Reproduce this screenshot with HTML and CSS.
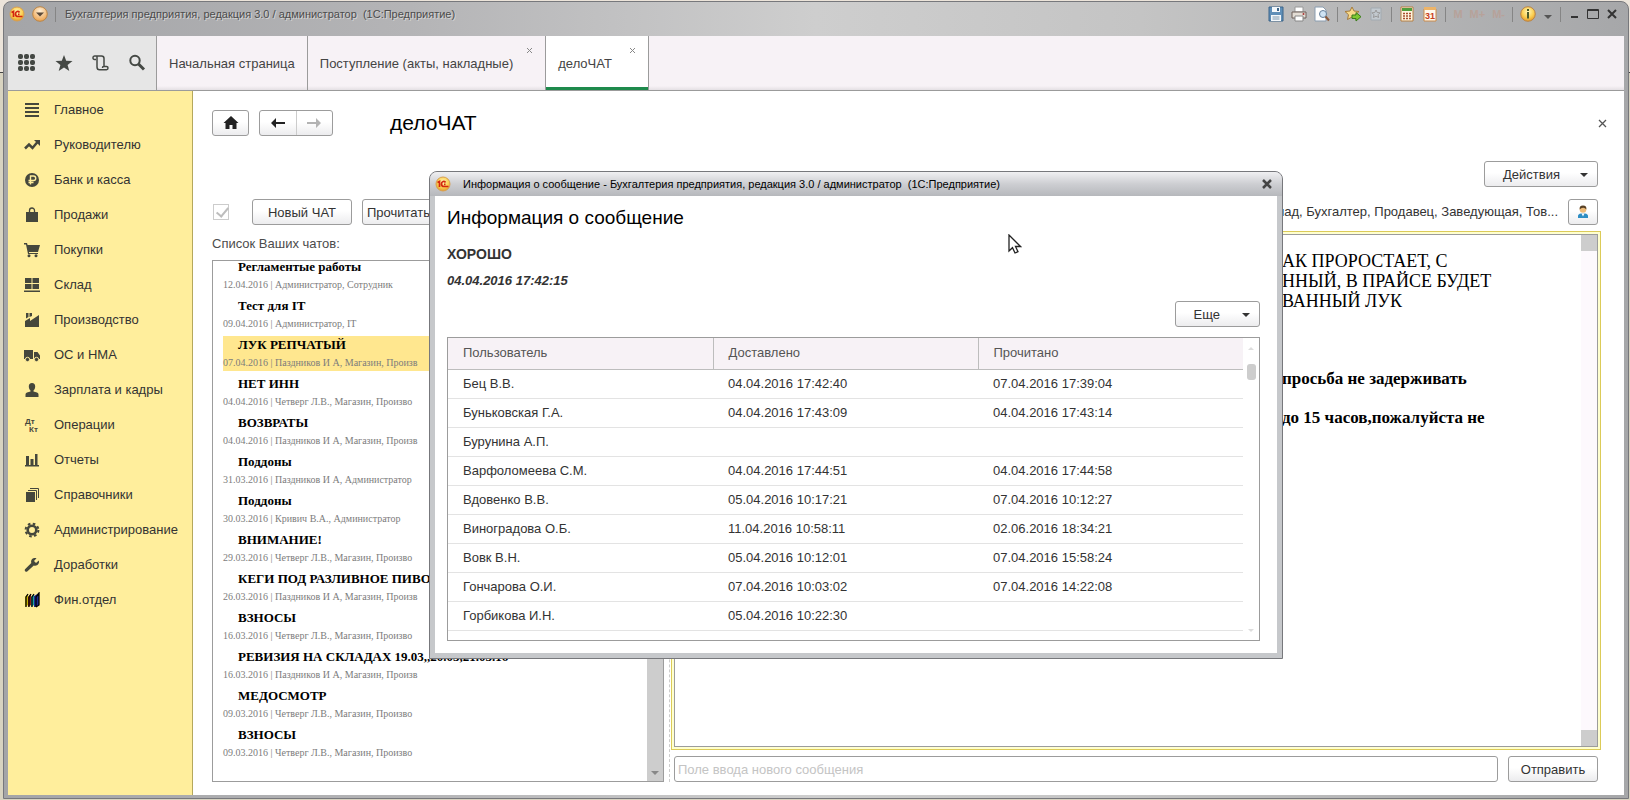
FILE: index.html
```html
<!DOCTYPE html>
<html lang="ru">
<head>
<meta charset="utf-8">
<title>Бухгалтерия предприятия, редакция 3.0</title>
<link rel="stylesheet" href="styles.css">
</head>
<body>
<svg class="defs" aria-hidden="true">
  <defs>
    <radialGradient id="gold" cx="50%" cy="35%" r="65%"><stop offset="0" stop-color="#fff6b8"/><stop offset="0.6" stop-color="#fbcf52"/><stop offset="1" stop-color="#e39a2c"/></radialGradient>
    <radialGradient id="orange" cx="50%" cy="30%" r="70%"><stop offset="0" stop-color="#fff0d8"/><stop offset="1" stop-color="#eda24c"/></radialGradient>
    <symbol id="logo" viewBox="0 0 16 16"><circle cx="8" cy="8" r="7" fill="url(#gold)" stroke="#d9a050"/><path d="M2.500 6.500 4.500 5.500V11M10.500 6.500C9.500 4.500 6.500 5.500 6.500 8S8 10.500 9 10.500H13.500M10.500 8.300H9" fill="none" stroke="#d3260f" stroke-width="1.700"/></symbol>
  </defs>
</svg>
<div class="window">
  <header class="titlebar">
    <svg class="logo" viewBox="0 0 16 16"><use href="#logo"/></svg>
    <button class="plain" aria-label="Меню"><svg width="16" height="16" viewBox="0 0 16 16"><circle cx="8" cy="8" r="7.300" fill="url(#orange)" stroke="#b98548"/><path d="M4 6.500h8L8 10.500z" fill="#5c4a38"/></svg></button>
    <span class="sep"></span>
    <span class="title">Бухгалтерия предприятия, редакция 3.0 / администратор&nbsp; (1С:Предприятие)</span>
    <div class="systools">
      <button class="plain" aria-label="Сохранить"><svg width="16" height="16" viewBox="0 0 16 16"><path d="M1 1h14v14H1z" fill="#5f8fb8" stroke="#3d6589"/><path d="M4 1h8v5H4zM3 9h10v6H3z" fill="#f3f7fa"/><path d="M4.500 11h7M4.500 13h7" stroke="#7c98ae"/><path d="M9 2h2v3H9z" fill="#3d6589"/></svg></button>
      <button class="plain" aria-label="Печать"><svg width="16" height="16" viewBox="0 0 16 16"><path d="M4 1h8v5H4z" fill="#fff" stroke="#999"/><path d="M1 6h14v6H1z" fill="#e3ddd5" stroke="#6d5f58"/><path d="M4 10h8v5H4z" fill="#fff" stroke="#888"/><circle cx="12.500" cy="8" r="1" fill="#a33"/></svg></button>
      <button class="plain" aria-label="Предварительный просмотр"><svg width="16" height="16" viewBox="0 0 16 16"><path d="M1 1h8l3 3v11H1z" fill="#fff" stroke="#8a9db0"/><circle cx="9" cy="8" r="3.500" fill="#cfe3f3" stroke="#66809a"/><path d="m11.500 10.500 3.500 4" stroke="#8b5a3c" stroke-width="2"/></svg></button>
      <span class="sep"></span>
      <button class="plain" aria-label="В избранное"><svg width="16" height="16" viewBox="0 0 16 16"><path d="m7 1 2 4 5 .5-3.500 3.200 1 4.800L7 11l-4.500 2.500 1-4.800L0 5.500 5 5z" fill="#f7d98a" stroke="#a67b3a"/><path d="M7 9h4V6.500l5 4.200-5 4.300v-2.500H7z" fill="#7fc832" stroke="#3b7d1c"/></svg></button>
      <button class="plain dim" aria-label="Избранное"><svg width="16" height="16" viewBox="0 0 16 16"><path d="M3 2h10v12H3z" fill="#c8d2da" stroke="#9aa6b0"/><path d="m8 4 1.200 2.500 2.800.3-2 2 .6 2.700L8 10.200 5.400 11.500 6 8.800l-2-2 2.800-.3z" fill="none" stroke="#8c8c8c"/></svg></button>
      <span class="sep"></span>
      <button class="plain" aria-label="Калькулятор"><svg width="16" height="16" viewBox="0 0 16 16"><path d="M2 1h12v14H2z" fill="#fff5e0" stroke="#b57e42"/><path d="M3 2h10v3H3z" fill="#4f9d3c"/><path d="M4 7.500h8M4 10h8M4 12.500h8" stroke="#a9502e" stroke-width="1.500" stroke-dasharray="2 1"/></svg></button>
      <button class="plain" aria-label="Календарь"><svg width="16" height="16" viewBox="0 0 16 16"><path d="M2 3h12v12H2z" fill="#fff9ee" stroke="#c98a4a"/><path d="M2 1h12v3H2z" fill="#edb468"/><text class="cal" x="8" y="13" text-anchor="middle">31</text></svg></button>
      <span class="sep"></span>
      <span class="mem">M</span><span class="mem">M+</span><span class="mem">M-</span>
      <span class="sep"></span>
      <button class="plain" aria-label="Справка"><svg width="16" height="16" viewBox="0 0 16 16"><circle cx="8" cy="8" r="7.300" fill="url(#gold)" stroke="#b98548"/><path d="M7 3h2v2H7zM7 6h2v6.500H7z" fill="#4b5a2a"/></svg></button>
      <svg width="10" height="16" viewBox="0 0 10 16"><path d="M1 9h8l-4 4z" fill="#555"/></svg>
      <span class="sep"></span>
      <button class="plain" aria-label="Свернуть"><svg width="12" height="16" viewBox="0 0 12 16"><path d="M3 11h7" stroke="#333" stroke-width="2"/></svg></button>
      <button class="plain" aria-label="Развернуть"><svg width="12" height="16" viewBox="0 0 12 16"><path d="M.5 3.500h11v9H.500z M0 4.500h12" fill="none" stroke="#333"/></svg></button>
      <button class="plain" aria-label="Закрыть"><svg width="12" height="16" viewBox="0 0 12 16"><path d="m2 4 8 8M10 4l-8 8" stroke="#333" stroke-width="2"/></svg></button>
    </div>
  </header>

  <div class="tabbar">
    <div class="quick">
      <button class="plain" aria-label="Разделы"><svg width="18" height="18" viewBox="0 0 18 18" fill="#444844"><rect x="0" y="0" width="5" height="5" rx="2"/><rect x="6" y="0" width="5" height="5" rx="2"/><rect x="12" y="0" width="5" height="5" rx="2"/><rect x="0" y="6" width="5" height="5" rx="2"/><rect x="6" y="6" width="5" height="5" rx="2"/><rect x="12" y="6" width="5" height="5" rx="2"/><rect x="0" y="12" width="5" height="5" rx="2"/><rect x="6" y="12" width="5" height="5" rx="2"/><rect x="12" y="12" width="5" height="5" rx="2"/></svg></button>
      <button class="plain" aria-label="Избранное"><svg width="18" height="18" viewBox="0 0 18 18"><path d="m9 1 2.200 5.700 6.300.3-4.900 3.900 1.700 6.100L9 13.500 3.700 17l1.700-6.100L.5 7l6.300-.3z" fill="#444844"/></svg></button>
      <button class="plain" aria-label="История"><svg width="18" height="18" viewBox="0 0 18 18"><path d="M5 5.500H3.500A1.500 1.700 0 0 1 3.500 2H10.500Q13 2 13 4.500V12.500M6 2.500V13Q6 15.800 8.500 15.800H15.500A1.500 1.700 0 0 0 15.500 12.400H12.500Q11.500 12.400 11.500 14" fill="none" stroke="#444844" stroke-width="1.500" stroke-linejoin="round"/></svg></button>
      <button class="plain" aria-label="Поиск"><svg width="18" height="18" viewBox="0 0 18 18"><circle cx="7" cy="6.500" r="4.700" fill="none" stroke="#444844" stroke-width="2"/><path d="m10.500 10 5.500 5.500" stroke="#444844" stroke-width="3"/></svg></button>
    </div>
    <nav class="tabs">
      <a class="tab" href="#">Начальная страница</a>
      <div class="tab tab-wide"><a href="#">Поступление (акты, накладные)</a><button class="tab-x" aria-label="Закрыть вкладку"><svg width="7" height="7" viewBox="0 0 7 7"><path d="m1 1 5 5M6 1 1 6" stroke="#888"/></svg></button></div>
      <div class="tab tab-active"><a href="#">делоЧАТ</a><button class="tab-x" aria-label="Закрыть вкладку"><svg width="7" height="7" viewBox="0 0 7 7"><path d="m1 1 5 5M6 1 1 6" stroke="#888"/></svg></button></div>
    </nav>
  </div>

  <div class="body">
    <nav class="sidebar">
      <a href="#"><svg viewBox="0 0 16 16"><path d="M1 1h14v2H1zM1 5h14v2H1zM1 9h14v2H1zM1 13h14v2H1z"/></svg>Главное</a>
      <a href="#"><svg viewBox="0 0 16 16"><path d="m1 11.500 4-4 3.500 3.500 5-6" fill="none" stroke="#45473c" stroke-width="2.500"/><path d="M10 3h6v6z"/></svg>Руководителю</a>
      <a href="#"><svg viewBox="0 0 16 16"><circle cx="8" cy="8" r="7"/><path d="M6.500 12.500V4H9.500a2.200 2.200 0 0 1 0 4.500H4.500M4.500 10.500H9.500" fill="none" stroke="#ffee9c" stroke-width="1.400"/></svg>Банк и касса</a>
      <a href="#"><svg viewBox="0 0 16 16"><path d="M2 5h12v10H2z"/><path d="M5.500 7V3.500a2.500 2.500 0 0 1 5 0V7" fill="none" stroke="#45473c" stroke-width="1.300"/></svg>Продажи</a>
      <a href="#"><svg viewBox="0 0 16 16"><path d="M0 1h3l.6 2H16l-2 7H5v1h9v1H4L2 2.500H0z"/><circle cx="5" cy="13.800" r="1.500"/><circle cx="12" cy="13.800" r="1.500"/></svg>Покупки</a>
      <a href="#"><svg viewBox="0 0 16 16"><path d="M1 1h6.500v5H1zM8.500 1H15v5H8.500zM1 7h6.500v5H1zM8.500 7H15v5H8.500zM0 13.500h16v1.500H0z"/></svg>Склад</a>
      <a href="#"><svg viewBox="0 0 16 16"><path d="M1 15V9l5-3v3l9-6v12zM2 1h2.500v4L2 6.500zM5.500 1H8v3l-2.500 1z"/></svg>Производство</a>
      <a href="#"><svg viewBox="0 0 16 16"><path d="M0 3h9v9H0zM10 5h3.500L16 8.500V12h-6z"/><circle cx="3.500" cy="12.500" r="2.200" stroke="#ffee9c"/><circle cx="12.500" cy="12.500" r="2.200" stroke="#ffee9c"/></svg>ОС и НМА</a>
      <a href="#"><svg viewBox="0 0 16 16"><path d="M8 1a3.300 3.500 0 0 1 3.200 3.500C11.200 7 10 8 9.500 8.500V9.500L13 10.500q1.500.5 1.500 2V15H1.500V12.500q0-1.500 1.500-2L6.500 9.500V8.500C6 8 4.800 7 4.800 4.500A3.300 3.500 0 0 1 8 1"/></svg>Зарплата и кадры</a>
      <a href="#"><svg viewBox="0 0 16 16"><text class="dk" x="1" y="7">Дт</text><text class="dk" x="5" y="15">Кт</text></svg>Операции</a>
      <a href="#"><svg viewBox="0 0 16 16"><path d="M2 4h3v9H2zM6.500 7h3v6h-3zM11 2h2.500v11H11zM1 13h14v1.500H1z"/></svg>Отчеты</a>
      <a href="#"><svg viewBox="0 0 16 16"><path d="M2 5h9v10H2z"/><path d="M4 3.500h8.500V13M6 1.500h8.500V11" fill="none" stroke="#45473c"/></svg>Справочники</a>
      <a href="#"><svg viewBox="0 0 16 16"><circle cx="8" cy="8" r="4.300" fill="none" stroke="#45473c" stroke-width="2.600"/><circle cx="8" cy="8" r="6.400" fill="none" stroke="#45473c" stroke-width="2" stroke-dasharray="2.600 2.430"/></svg>Администрирование</a>
      <a href="#"><svg viewBox="0 0 16 16"><path d="M14.800 3.500 12 6 10 4l2.500-2.800C9 0 6.300 2.500 7.300 6L1 12.200q-.8 1 .2 2t2 .2L9.800 8.500c3.500 1 6-2 5-5z"/></svg>Доработки</a>
      <a href="#"><svg viewBox="0 0 16 16"><path d="M1 5 4 2v11l-3 2z" fill="#c8b400"/><path d="M4 5 7 2v11l-3 2z" fill="#8e2018"/><path d="M7 5l3-3v11l-3 2z" fill="#18a0a0"/><path d="m10 4 5-3v12l-4 2H10z" fill="#1c2a90"/><path d="M2 15V5l2-3M5 15V5l2-3M8 15V5l2-3M12 15V5l3-4v12l-3 2" fill="none" stroke="#000" stroke-width="1.300"/></svg>Фин.отдел</a>
    </nav>

    <main class="content">
      <div class="navrow">
        <button class="btn home" aria-label="Домой"><svg width="16" height="14" viewBox="0 0 16 14"><path d="m8 0 7.500 7H13.500v6H9.500V9h-3v4h-4V7H.5z" fill="#222"/></svg></button>
        <div class="pair">
          <button aria-label="Назад"><svg width="14" height="12" viewBox="0 0 14 12"><path d="M14 5H5V1L0 6l5 5V7h9z" fill="#222"/></svg></button>
          <button aria-label="Вперед"><svg width="14" height="12" viewBox="0 0 14 12"><path d="M0 5h9V1l5 5-5 5V7H0z" fill="#b3b3b3"/></svg></button>
        </div>
        <h1>делоЧАТ</h1>
        <button class="plain form-x" aria-label="Закрыть"><svg width="9" height="9" viewBox="0 0 9 9"><path d="m1 1 7 7M8 1 1 8" stroke="#555" stroke-width="1.300"/></svg></button>
      </div>
      <div class="actions"><button class="btn drop">Действия<span class="caret"></span></button></div>

      <div class="split">
        <section class="left">
          <div class="tools">
            <input class="check" type="checkbox" checked disabled aria-label="Отметка">
            <button class="btn newchat">Новый ЧАТ</button>
            <button class="btn readall">Прочитать все</button>
          </div>
          <p class="label">Список Ваших чатов:</p>
          <div class="chatbox">
            <ul class="chats">
              <li><b>Регламентые работы</b><span>12.04.2016 | Администратор, Сотрудник</span></li>
              <li><b>Тест для IT</b><span>09.04.2016 | Администратор, IT</span></li>
              <li class="sel"><b>ЛУК РЕПЧАТЫЙ</b><span>07.04.2016 | Паздников И А, Магазин, Произв</span></li>
              <li><b>НЕТ ИНН</b><span>04.04.2016 | Четверг Л.В., Магазин, Произво</span></li>
              <li><b>ВОЗВРАТЫ</b><span>04.04.2016 | Паздников И А, Магазин, Произв</span></li>
              <li><b>Поддоны</b><span>31.03.2016 | Паздников И А, Администратор</span></li>
              <li><b>Поддоны</b><span>30.03.2016 | Кривич В.А., Администратор</span></li>
              <li><b>ВНИМАНИЕ!</b><span>29.03.2016 | Четверг Л.В., Магазин, Произво</span></li>
              <li><b>КЕГИ ПОД РАЗЛИВНОЕ ПИВО</b><span>26.03.2016 | Паздников И А, Магазин, Произв</span></li>
              <li><b>ВЗНОСЫ</b><span>16.03.2016 | Четверг Л.В., Магазин, Произво</span></li>
              <li><b>РЕВИЗИЯ НА СКЛАДАХ 19.03,,20.03,21.03.16</b><span>16.03.2016 | Паздников И А, Магазин, Произв</span></li>
              <li><b>МЕДОСМОТР</b><span>09.03.2016 | Четверг Л.В., Магазин, Произво</span></li>
              <li><b>ВЗНОСЫ</b><span>09.03.2016 | Четверг Л.В., Магазин, Произво</span></li>
            </ul>
            <div class="track"><span class="caret"></span></div>
          </div>
        </section>
        <div class="splitter"></div>
        <section class="right">
          <div class="tools people">
            <span>Склад, Бухгалтер, Продавец, Заведующая, Тов...</span>
            <button class="btn person" aria-label="Участники"><svg width="14" height="14" viewBox="0 0 14 14"><path d="M2 13V11q0-2 3-2.500h4q3 .5 3 2.500v2z" fill="#2e8ec4"/><path d="m5.500 8.500 1.500 3 1.500-3z" fill="#fff"/><circle cx="7" cy="4.500" r="3.300" fill="#eebc7a"/><path d="M3.700 4.500Q3 .5 7 .5t3.300 4Q9 2.500 7 2.700T3.700 4.500" fill="#594126"/></svg></button>
          </div>
          <div class="frame">
            <div class="messages">
              <div class="text">
                <p>АК ПРОРОСТАЕТ, С<br>ННЫЙ, В ПРАЙСЕ БУДЕТ<br>ВАННЫЙ ЛУК</p>
                <p class="strong">просьба не задерживать</p>
                <p class="strong">до 15 часов,пожалуйста не</p>
              </div>
              <div class="strip"></div>
            </div>
          </div>
          <div class="send">
            <input type="text" placeholder="Поле ввода нового сообщения" aria-label="Поле ввода нового сообщения">
            <button class="btn">Отправить</button>
          </div>
        </section>
      </div>
    </main>
  </div>
</div>

<div class="modal" role="dialog" aria-labelledby="info-title">
  <header class="modal-bar">
    <svg class="logo" viewBox="0 0 16 16"><use href="#logo"/></svg>
    <span>Информация о сообщение - Бухгалтерия предприятия, редакция 3.0 / администратор&nbsp; (1С:Предприятие)</span>
    <button class="plain" aria-label="Закрыть"><svg width="12" height="12" viewBox="0 0 12 12"><path d="m2 2 8 8M10 2l-8 8" stroke="#444" stroke-width="2.500"/></svg></button>
  </header>
  <div class="modal-body">
    <h2 id="info-title">Информация о сообщение</h2>
    <p class="msg">ХОРОШО</p>
    <p class="date">04.04.2016 17:42:15</p>
    <div class="more"><button class="btn drop">Еще<span class="caret"></span></button></div>
    <div class="grid">
      <table>
        <thead><tr><th>Пользователь</th><th>Доставлено</th><th>Прочитано</th></tr></thead>
        <tbody>
          <tr><td>Бец В.В.</td><td>04.04.2016 17:42:40</td><td>07.04.2016 17:39:04</td></tr>
          <tr><td>Буньковская Г.А.</td><td>04.04.2016 17:43:09</td><td>04.04.2016 17:43:14</td></tr>
          <tr><td>Бурунина А.П.</td><td></td><td></td></tr>
          <tr><td>Варфоломеева С.М.</td><td>04.04.2016 17:44:51</td><td>04.04.2016 17:44:58</td></tr>
          <tr><td>Вдовенко В.В.</td><td>05.04.2016 10:17:21</td><td>07.04.2016 10:12:27</td></tr>
          <tr><td>Виноградова О.Б.</td><td>11.04.2016 10:58:11</td><td>02.06.2016 18:34:21</td></tr>
          <tr><td>Вовк В.Н.</td><td>05.04.2016 10:12:01</td><td>07.04.2016 15:58:24</td></tr>
          <tr><td>Гончарова О.И.</td><td>07.04.2016 10:03:02</td><td>07.04.2016 14:22:08</td></tr>
          <tr><td>Горбикова И.Н.</td><td>05.04.2016 10:22:30</td><td></td></tr>
        </tbody>
      </table>
      <div class="bar"><span class="up"></span><span class="thumb"></span><span class="down"></span></div>
    </div>
  </div>
</div>
<svg class="cursor" width="14" height="20" viewBox="0 0 14 20"><path d="M1 1v16l3.500-3.300L7 19l3-1.300L7.500 12.500H12.500z" fill="#fff" stroke="#222" stroke-width="1.300"/></svg>
</body>
</html>
```
FILE: styles.css
```css
* { box-sizing: border-box; }
body {
  margin: 0;
  height: 100vh;
  display: flex;
  overflow: hidden;
  position: relative;
  background: linear-gradient(#ece4da 72px, #444 72px, #444 73px, #d8d3c0 73px);
  font: 13px/16px "Liberation Sans", Arial, sans-serif;
  color: #333;
}
h1, h2, p, ul { margin: 0; padding: 0; }
a { color: inherit; text-decoration: none; }
button, input { font: inherit; color: inherit; }
button { cursor: pointer; }
.defs { position: absolute; width: 0; height: 0; }
.plain { padding: 0; border: 0; background: none; display: flex; }

/* Main window */
.window {
  flex: 1;
  margin: 1px 1px 1px 3px;
  padding: 0 4px 3px;
  border: 1px solid #77787c;
  border-radius: 8px 8px 0 0;
  background: linear-gradient(90deg, #a4a5a8, #b4b4b6 25%, #cecece 50%, #c4c4c4 70%, #a6a7a9);
  display: flex;
  flex-direction: column;
}
.titlebar {
  height: 34px;
  padding: 0 6px 10px 1px;
  display: flex;
  align-items: center;
  gap: 7px;
  font-size: 11px;
  color: #4c4c4c;
  text-shadow: 1px 1px 0 #d4d4d4;
}
.logo { width: 16px; height: 16px; flex: none; }
.sep { width: 1px; height: 15px; background: #858585; }
.title { margin-left: 2px; white-space: nowrap; }
.systools { margin-left: auto; display: flex; align-items: center; gap: 7px; }
.dim { opacity: 0.7; }
.mem { color: #b7a29a; font-weight: bold; text-shadow: none; }
.cal { font: bold 9px "Liberation Sans", Arial, sans-serif; fill: #c8401c; }

.tabbar {
  height: 55px;
  display: flex;
  border-bottom: 1px solid #9b9b9b;
  background: linear-gradient(#f7f2f6 50px, #e4e0e4);
}
.quick {
  width: 149px;
  padding: 0 10px;
  display: flex;
  align-items: center;
  justify-content: space-between;
  background: #e6e6e6;
  border-right: 1px solid #9b9b9b;
}
.tabs { display: flex; color: #444; }
.tab {
  position: relative;
  padding: 2px 12px 0;
  display: flex;
  align-items: center;
  border-right: 1px solid #9b9b9b;
  white-space: nowrap;
}
.tab-wide { padding-right: 32px; }
.tab-active { padding-right: 36px; background: #fff; box-shadow: inset 0 -3px #1e8a4c; }
.tab-x { position: absolute; top: 11px; right: 12px; padding: 0; border: 0; background: none; display: flex; }

.body { flex: 1; display: flex; min-height: 0; background: #fff; }
.sidebar { width: 185px; flex: none; padding-top: 1px; background: #ffee9c; border-right: 1px solid #b5a85c; }
.sidebar a { height: 35px; padding-left: 16px; display: flex; align-items: center; gap: 14px; }
.sidebar svg { width: 16px; height: 16px; flex: none; fill: #45473c; }
.dk { font: bold 8px "Liberation Sans", Arial, sans-serif; }

/* Form */
.content { flex: 1; min-width: 0; padding: 19px 26px 13px 19px; display: flex; flex-direction: column; }
.btn {
  height: 26px;
  padding: 1px 10px 0;
  border: 1px solid #9c9c9c;
  border-radius: 3px;
  background: linear-gradient(#fff 45%, #ececee);
  white-space: nowrap;
}
.navrow { display: flex; align-items: center; height: 26px; }
.home { width: 37px; padding: 0; display: flex; align-items: center; justify-content: center; }
.pair { display: flex; width: 74px; height: 26px; margin-left: 10px; border: 1px solid #9c9c9c; border-radius: 3px; background: linear-gradient(#fff 45%, #ececee); }
.pair button { flex: 1; padding: 0; border: 0; background: none; display: flex; align-items: center; justify-content: center; }
.pair button + button { border-left: 1px solid #ccc; }
h1 { margin-left: 57px; font-size: 21px; line-height: 26px; font-weight: normal; color: #000; }
.form-x { margin: 0 -9px 0 auto; }
.actions { margin-top: 25px; display: flex; justify-content: flex-end; }
.drop { display: flex; align-items: center; padding: 1px 9px 0 18px; gap: 20px; }
.caret { border: 4px solid transparent; border-top-color: #333; border-bottom: 0; }

.split { flex: 1; min-height: 0; margin-top: 12px; display: flex; }
.left { width: 452px; display: flex; flex-direction: column; }
.tools { height: 26px; display: flex; align-items: center; gap: 10px; }
.check { position: relative; appearance: none; width: 16px; height: 16px; margin: 0 13px 0 1px; border: 1px solid #ccc; }
.check::after { content: ""; position: absolute; left: 5px; top: 0; width: 5px; height: 10px; border: solid #bdbdbd; border-width: 0 2px 2px 0; transform: rotate(40deg); }
.newchat { width: 100px; }
.readall { padding: 1px 4px 0; }
.label { margin: 11px 0 8px; color: #4c4c4c; }
.chatbox { flex: 1; min-height: 0; border: 1px solid #9c9c9c; display: flex; overflow: hidden; }
.chats { flex: 1; min-width: 0; margin-top: -3px; padding-left: 10px; list-style: none; font-family: "Liberation Serif", "Times New Roman", serif; }
.chats li { margin-bottom: 4px; white-space: nowrap; }
.chats b { display: block; padding-left: 15px; line-height: 18px; color: #000; }
.chats span { display: block; font-size: 10px; line-height: 17px; color: #7c7c7c; }
.chats .sel { background: #ffe78f; }
.track { width: 16px; background: #cdcdcd; display: flex; align-items: flex-end; justify-content: center; padding-bottom: 6px; }
.track .caret { border-top-color: #888; }
.splitter { width: 1px; margin: 32px 1px 0 5px; border-left: 1px dashed #ccc; }

.right { flex: 1; min-width: 0; display: flex; flex-direction: column; }
.people { margin-bottom: 6px; justify-content: flex-end; white-space: nowrap; }
.person { width: 30px; padding: 0; display: flex; align-items: center; justify-content: center; }
.frame { flex: 1; min-height: 0; margin-right: -3px; padding: 2px; border: 1px solid #dccb58; background: #ffffd0; display: flex; }
.messages { flex: 1; border: 1px solid #9c9c9c; background: #fff; display: flex; }
.text { width: 299px; margin-left: auto; padding-top: 16px; font: 18px/20px "Liberation Serif", "Times New Roman", serif; color: #000; white-space: nowrap; }
.text .strong { margin-top: 19px; font-size: 17px; font-weight: bold; }
.text p:first-child + .strong { margin-top: 58px; }
.strip { width: 16px; background: linear-gradient(#cdcdcd 16px, #fdf9fd 16px, #fdf9fd calc(100% - 16px), #cdcdcd calc(100% - 16px)); }
.send { margin: 6px 0 0 3px; display: flex; gap: 10px; }
.send input { flex: 1; min-width: 0; height: 26px; padding: 0 3px; border: 1px solid #9c9c9c; border-radius: 3px; }
.send input::placeholder { color: #c4c4c4; opacity: 1; }
.send .btn { width: 90px; }

/* Message info dialog */
.modal {
  position: absolute;
  left: 429px;
  top: 171px;
  width: 854px;
  padding: 0 5px 5px;
  border: 1px solid #77787c;
  border-radius: 8px 8px 0 0;
  background: #c6c8cb;
}
.modal-bar {
  height: 24px;
  margin: 0 -5px;
  padding: 0 9px 0 5px;
  border-radius: 7px 7px 0 0;
  display: flex;
  align-items: center;
  gap: 12px;
  font-size: 11px;
  color: #000;
  white-space: nowrap;
  background: linear-gradient(#f0f0f2, #cdced2 50%, #b6b8bc);
}
.modal-bar button { margin-left: auto; }
.modal-body { padding: 10px 17px 12px 12px; background: #fff; }
h2 { font-size: 19px; line-height: 24px; font-weight: normal; color: #000; }
.msg { margin-top: 16px; line-height: 16px; font-size: 14px; font-weight: bold; }
.date { margin-top: 11px; font-weight: bold; font-style: italic; }
.more { margin: 12px 0 10px; display: flex; justify-content: flex-end; }
.more .drop { gap: 22px; }
.grid { height: 304px; border: 1px solid #9c9c9c; display: flex; overflow: hidden; }
table { width: calc(100% - 16px); align-self: flex-start; table-layout: fixed; border-collapse: collapse; }
th { height: 31px; padding: 0 15px; text-align: left; font-weight: normal; color: #555; background: #f7f2f6; border-bottom: 1px solid #bdbdbd; }
th + th { border-left: 1px solid #bdbdbd; }
td { height: 29px; padding: 1px 15px 0; border-bottom: 1px solid #e3e3e3; }
.bar { width: 16px; padding: 9px 0 8px; display: flex; flex-direction: column; align-items: center; }
.up { border: 3px solid transparent; border-top: 0; border-bottom-color: #ddd; }
.thumb { width: 9px; height: 16px; margin: 14px 0 auto; border-radius: 3px; background: #cdcdcd; }
.down { border: 3px solid transparent; border-bottom: 0; border-top-color: #ddd; }
.cursor { position: absolute; left: 1008px; top: 234px; }
```
